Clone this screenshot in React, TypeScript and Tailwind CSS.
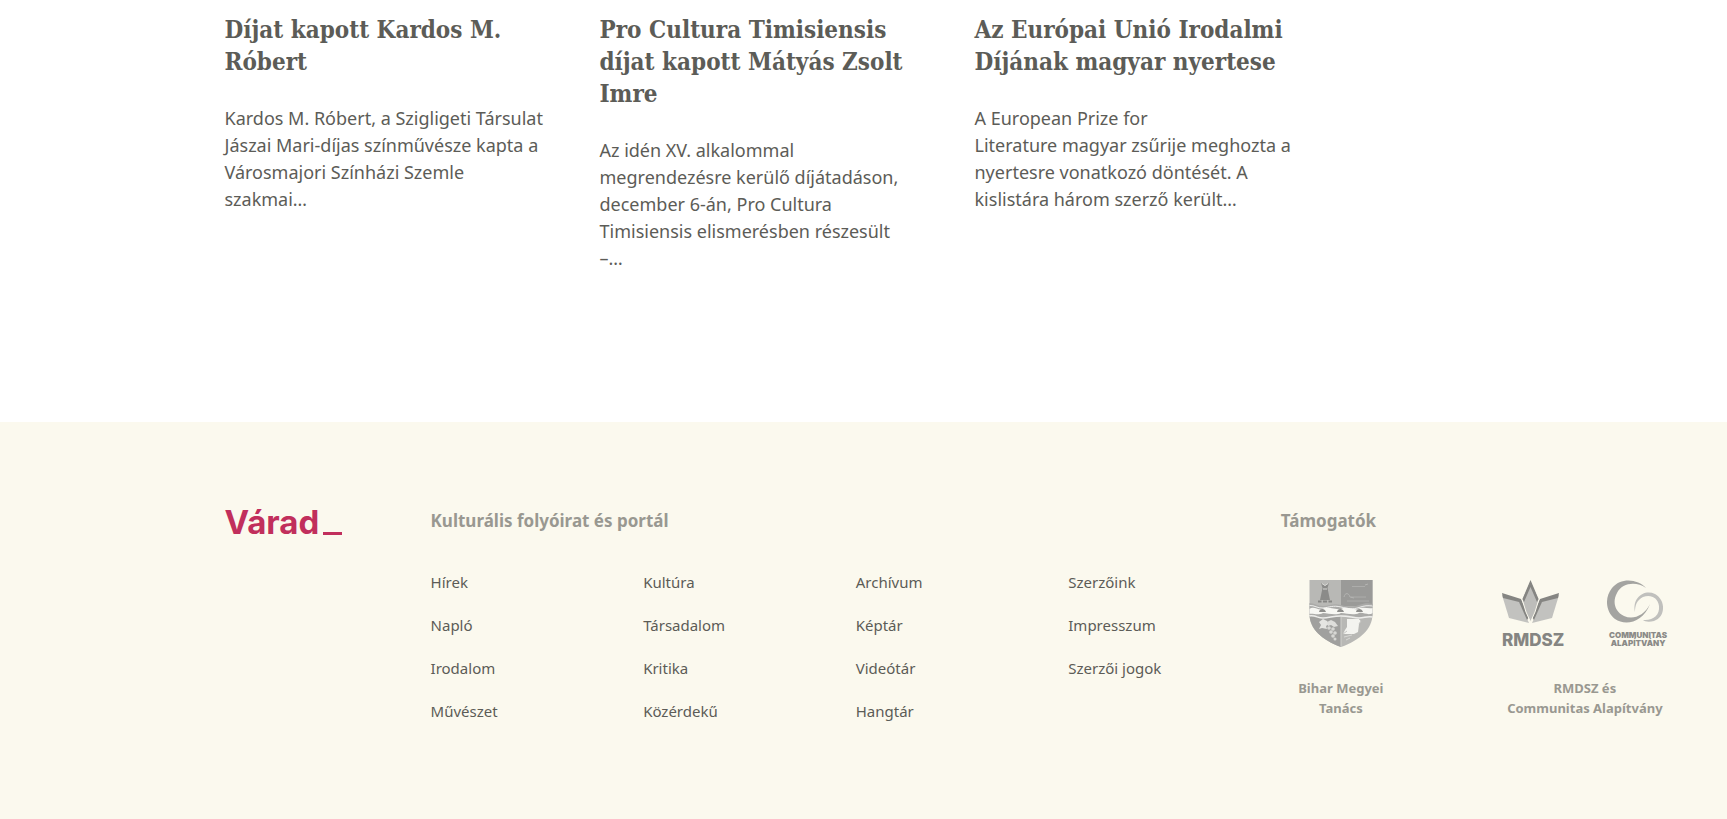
import React from "react";

const articles = [
  {
    title: "Díjat kapott Kardos M. Róbert",
    excerpt:
      "Kardos M. Róbert, a Szigligeti Társulat Jászai Mari-díjas színművésze kapta a Városmajori Színházi Szemle szakmai…",
  },
  {
    title: "Pro Cultura Timisiensis díjat kapott Mátyás Zsolt Imre",
    excerpt:
      "Az idén XV. alkalommal megrendezésre kerülő díjátadáson, december 6-án, Pro Cultura Timisiensis elismerésben részesült\n–…",
  },
  {
    title: "Az Európai Unió Irodalmi Díjának magyar nyertese",
    excerpt:
      "A European Prize for Literature\u00a0magyar zsűrije meghozta a nyertesre vonatkozó döntését. A kislistára három szerző került…",
  },
];

const linkColumns = [
  ["Hírek", "Napló", "Irodalom", "Művészet"],
  ["Kultúra", "Társadalom", "Kritika", "Közérdekű"],
  ["Archívum", "Képtár", "Videótár", "Hangtár"],
  ["Szerzőink", "Impresszum", "Szerzői jogok"],
];

function BiharCrest() {
  return (
    <svg width="64" height="68" viewBox="0 0 64 68" role="img" aria-label="Bihar Megyei Tanács">
      <defs>
        <clipPath id="shield">
          <path d="M0.500 0H63.500V34C63.500 49 51 60 32 67C13 60 0.500 49 0.500 34Z" />
        </clipPath>
      </defs>
      <g clipPath="url(#shield)">
        <rect width="64" height="67" fill="#b8b8b5" />
        <rect x="32" width="32" height="26" fill="#9a9a98" />
        <path d="M0 36H32V67H0Z" fill="#a0a09e" />
        <path d="M12 3L16 6L20 3L18.500 8L21 20H11L13.500 8Z" fill="#8b8b89" />
        <path d="M13 3.500L16 5.500L19 3.500M14 9H18" stroke="#d8d8d5" fill="none" />
        <path d="M9 21.500H12.500M14 21.500H18M19.500 21.500H23" stroke="#858583" strokeWidth="2" />
        <path d="M43 6.500H56M42 17H57M38 21H60" stroke="#adadab" />
        <path d="M35 17C36 12 40 13 41 17L45 18M56 5L59 4" stroke="#b4b4b2" fill="none" />
        <path d="M0 23C6 23 7 26 14 26S24 23 32 25S44 27 50 25S58 23 64 24V36C57 35 56 37 50 37S39 34 32 35S20 37 14 37S7 34 0 35Z" fill="#aaaaa8" />
        <path d="M0 25.500C6 25 8 28.500 14 28S24 25 32 27S44 29.500 50 27.500S58 25.500 64 26" stroke="#eeeeec" fill="none" />
        <path d="M0 29C5 26 7 29 12 29.500C18 26 24 29 31 29.500C37 26 42 29 48 29.500C54 26 58 29 64 28V33C59 36 55 32 50 33C44 36 38 33 32 33C26 36 19 33 14 33C8 36 5 33 0 34Z" fill="#f7f7f3" />
        <path d="M10 32C10.500 28 16 28 17 32ZM28 32C28.500 28 34 28 35 32ZM47 32C47.500 28 53 28 54 32Z" fill="#8e8e8c" />
        <path d="M0 36C7 35 8 38 14 38S24 36 32 36S44 38 50 38S57 36 64 37" stroke="#ededeb" strokeWidth="1.500" fill="none" />
        <path d="M32 37V67" stroke="#cfcfcc" />
        <path d="M10 42L14 39L18 41L20 44L17 46L18 49L13 48L10 49L12 45Z" fill="#e5e5e2" />
        <path d="M18 42L22 40L26 42L29 46L25 47L22 45L19 46Z" fill="#dededb" />
        <g fill="#d7d7d4">
          <circle cx="20" cy="48" r="1.800" />
          <circle cx="24" cy="49" r="1.800" />
          <circle cx="22" cy="52" r="1.800" />
          <circle cx="26" cy="53" r="1.800" />
          <circle cx="24" cy="56" r="1.800" />
          <circle cx="26" cy="59" r="1.500" />
        </g>
        <path d="M38 39H50L52 41L50 44L49 52L45 54L34 54L36 50L38 47Z" fill="#f3f3ef" />
        <path d="M50 39L52 41L50 44M34 54L38 51" stroke="#c5c5c2" fill="none" />
        <path d="M35 57L43 55M37 60L41 58" stroke="#d8d8d5" />
      </g>
    </svg>
  );
}

function RmdszLogo() {
  return (
    <svg width="64" height="68" viewBox="0 0 64 68" role="img" aria-label="RMDSZ">
      <path d="M1 15L18 21L28 43L8 38Z" fill="#c2c2bf" />
      <path d="M1 13L20 19L28 37L26 40L18 22L2 18Z" fill="#858582" />
      <path d="M58 15L41 21L31 43L51 38Z" fill="#c2c2bf" />
      <path d="M58 13L39 19L31 37L33 40L41 22L57 18Z" fill="#858582" />
      <path d="M29.500 0L38 19L34 32L29.500 42L25 32L21 19Z" fill="#bdbdba" stroke="#fbf9ee" />
      <path d="M29.500 0L37.500 19L36 22L29.500 7L23 22L21.500 19Z" fill="#858582" />
      <text x="1" y="66" fill="#858582" fontSize="17" fontWeight="800" fontFamily="Inter, sans-serif">
        RMDSZ
      </text>
    </svg>
  );
}

function CommunitasLogo() {
  return (
    <svg width="62" height="68" viewBox="0 0 62 68" role="img" aria-label="Communitas Alapítvány">
      <path d="M39 8C31 -1 14 -3 5 8C-3 18 -1 32 8 39C18 46 36 43 43 24C37 36 26 40 17 36C8 32 5 22 10 13C15 3 29 1 39 8Z" fill="#a4a4a1" />
      <path d="M28 32C25 18 37 9 48 14C59 20 59 37 47 41C43 42 38 42 36 40C46 41 53 35 52 26C51 17 43 14 36 17C30 20 28 25 28 32Z" fill="#c0c0bd" />
      <g fill="#8b8b88" fontSize="8" fontWeight="900" fontFamily="Inter, sans-serif" textAnchor="middle">
        <text x="31" y="58">COMMUNITAS</text>
        <text x="31" y="66">ALAPÍTVÁNY</text>
      </g>
    </svg>
  );
}

export default function App() {
  return (
    <div className="min-h-screen bg-white font-['Noto_Sans',sans-serif] text-[#5c5c57]">
      <main className="pt-[14px] pr-6 pb-[150px] pl-[13%]">
        <div className="grid max-w-[1075px] grid-cols-3 gap-[50px]">
          {articles.map((article) => (
            <article key={article.title}>
              <h2 className="font-['DejaVu_Serif_Condensed','DejaVu_Serif',serif] text-2xl leading-8 font-bold">
                {article.title}
              </h2>
              <p className="mt-[27px] text-lg leading-[27px] whitespace-pre-line">{article.excerpt}</p>
            </article>
          ))}
        </div>
      </main>

      <footer className="grid grid-cols-[206fr_850fr_446fr] bg-[#fbf9ee] pt-[85px] pb-24 pl-[13%]">
        <a href="#" aria-label="Várad" className="flex h-[30px] items-center gap-1 self-start text-[#c12f5c]">
          <span className="font-['Inter',sans-serif] text-[33px] leading-[30px] font-bold">Várad</span>
          <span className="mt-[22px] h-[3px] w-[19px] bg-[#c12f5c]" />
        </a>

        <nav aria-label="Lábléc">
          <h3 className="text-[17px] leading-7 font-bold text-[#999891]">Kulturális folyóirat és portál</h3>
          <div className="mt-9 grid grid-cols-4">
            {linkColumns.map((links) => (
              <ul key={links[0]} className="flex flex-col gap-5">
                {links.map((label) => (
                  <li key={label} className="text-[15px] leading-[23px]">
                    <a href="#">{label}</a>
                  </li>
                ))}
              </ul>
            ))}
          </div>
        </nav>

        <section className="text-[#999891]">
          <h3 className="text-[17px] leading-7 font-bold">Támogatók</h3>
          <div className="mt-[45px] flex gap-[100px] text-center text-[13px] leading-5 font-bold">
            <figure className="flex w-[120px] flex-col items-center gap-[30px]">
              <BiharCrest />
              <figcaption>
                Bihar Megyei
                <br />
                Tanács
              </figcaption>
            </figure>
            <figure className="flex w-[168px] flex-col items-center gap-[30px]">
              <div className="flex w-full justify-between">
                <RmdszLogo />
                <CommunitasLogo />
              </div>
              <figcaption>
                RMDSZ és
                <br />
                Communitas Alapítvány
              </figcaption>
            </figure>
          </div>
        </section>
      </footer>
    </div>
  );
}
